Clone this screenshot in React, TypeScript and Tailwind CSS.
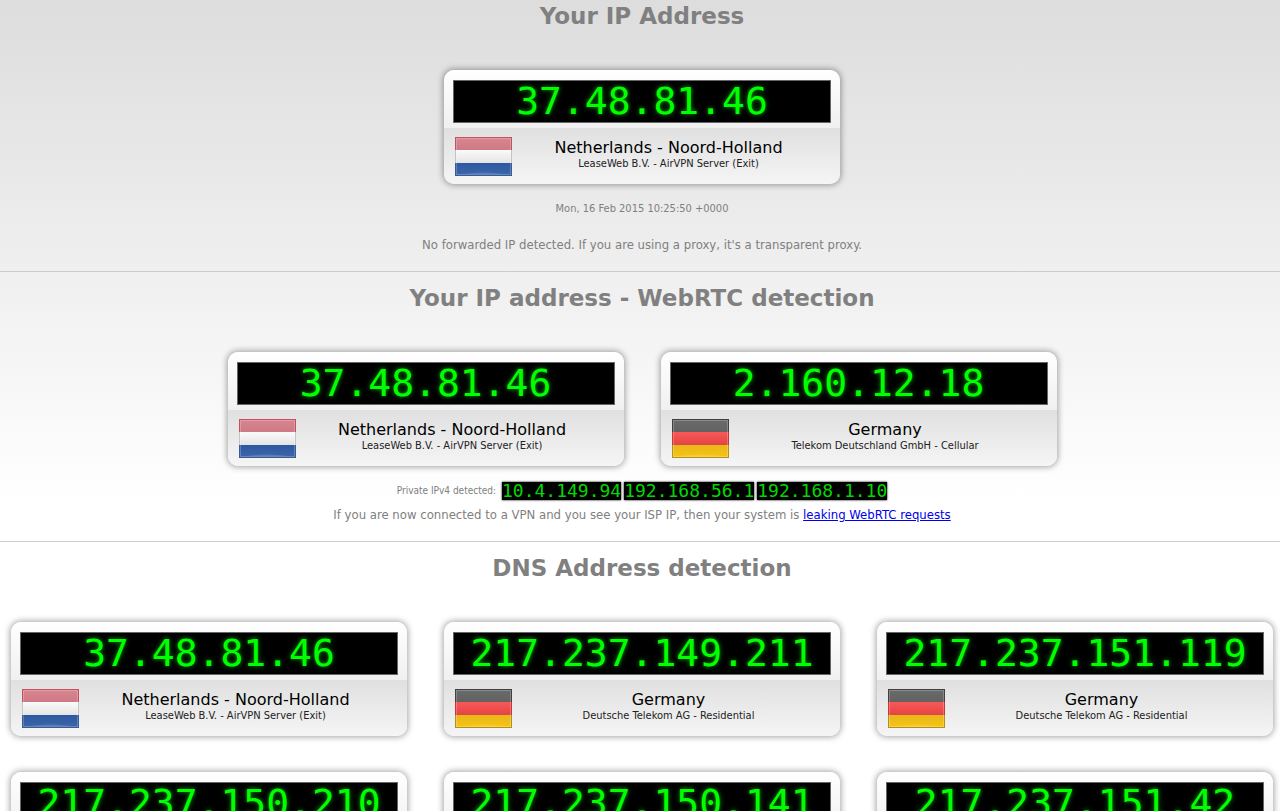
import { useId, type ReactNode } from 'react';

type Country = 'nl' | 'de';

type Address = {
    ip: string;
    country: Country;
    place: string;
    owner: string;
};

const vpnExit: Address = {
    ip: '37.48.81.46',
    country: 'nl',
    place: 'Netherlands - Noord-Holland',
    owner: 'LeaseWeb B.V. - AirVPN Server (Exit)',
};

const telekom = (ip: string, owner = 'Deutsche Telekom AG - Residential'): Address => ({
    ip,
    country: 'de',
    place: 'Germany',
    owner,
});

const webrtc = [vpnExit, telekom('2.160.12.18', 'Telekom Deutschland GmbH - Cellular')];

const privateIps = ['10.4.149.94', '192.168.56.1', '192.168.1.10'];

const dns = [
    vpnExit,
    telekom('217.237.149.211'),
    telekom('217.237.151.119'),
    telekom('217.237.150.210'),
    telekom('217.237.150.141'),
    telekom('217.237.151.42'),
];

// top colour, bottom colour and outline of each stripe
const stripes = {
    nl: [
        ['#d8858f', '#cd7a84', '#c4505f'],
        ['#fbfbfb', '#e4e4e4', '#c4c4c4'],
        ['#2d57a0', '#3c66aa', '#3a5a92'],
    ],
    de: [
        ['#6a6a6a', '#626262', '#404040'],
        ['#fa5858', '#e24444', '#c93636'],
        ['#e8b61c', '#f6c410', '#b08f26'],
    ],
};

function Flag({ country }: { country: Country }) {
    const id = useId();

    return (
        <svg className="h-[39px] w-[57px] shrink-0" viewBox="0 0 57 39" role="img" aria-label={country}>
            {stripes[country].map(([top, bottom, edge], i) => (
                <g key={i}>
                    <linearGradient id={`${id}${i}`} x2="0" y2="1">
                        <stop offset="0" stopColor={top} />
                        <stop offset="1" stopColor={bottom} />
                    </linearGradient>
                    <rect y={i * 13} width="57" height="13" fill={edge} />
                    <rect x="1" y={i === 0 ? 1 : i * 13} width="55" height={i === 1 ? 13 : 12} fill={`url(#${id}${i})`} />
                </g>
            ))}
            <rect x="1.5" y="1.5" width="54" height="36" fill="none" stroke="#fff" strokeOpacity="0.22" />
            <path d="M8 37Q28 34 49 37Z" fill="#fff" fillOpacity="0.15" />
        </svg>
    );
}

function AddressCard({ address }: { address: Address }) {
    return (
        <div className="w-[396px] overflow-hidden rounded-[10px] shadow-[0_0_6px_1px_rgba(0,0,0,0.36)]">
            <div className="bg-linear-to-b from-white to-[#f0f0f0] px-[9px] pt-[10px] pb-[5px]">
                <div className="border border-[#666] bg-black text-center font-['DejaVu_Sans_Mono',monospace] text-[38px] leading-[41px] text-[#00ff00] [text-shadow:0_0_5px_#00a000]">
                    {address.ip}
                </div>
            </div>
            <div className="flex bg-linear-to-b from-[#e0e0e0] to-[#f5f5f5] px-[11px] pt-[9px] pb-2">
                <Flag country={address.country} />
                <div className="flex-1 pt-px pr-1 text-center">
                    <div className="text-[16px] leading-[20px] text-black">{address.place}</div>
                    <div className="font-['DejaVu_Sans_Condensed','DejaVu_Sans',sans-serif] text-[11px] leading-[12px] text-[#222]">
                        {address.owner}
                    </div>
                </div>
            </div>
        </div>
    );
}

function Section({ title, children }: { title: string; children: ReactNode }) {
    return (
        <section className="border-t border-[#ccc] pt-[10px] pb-[17px] pl-1 first:border-t-0 first:pt-0">
            <h1 className="mb-[38px] text-center text-[23px] leading-[32px] font-bold text-[#808080]">{title}</h1>
            {children}
        </section>
    );
}

export default function App() {
    return (
        <main className="min-h-screen bg-white bg-linear-to-b from-[#ddd] to-white to-[500px] font-['DejaVu_Sans',sans-serif] text-[#808080]">
            <Section title="Your IP Address">
                <div className="flex justify-center">
                    <AddressCard address={vpnExit} />
                </div>
                <p className="mt-4 text-center font-['DejaVu_Sans_Condensed','DejaVu_Sans',sans-serif] text-[11px] leading-[18px]">
                    Mon, 16 Feb 2015 10:25:50 +0000
                </p>
                <p className="mt-[18px] text-center font-['DejaVu_Sans_Condensed','DejaVu_Sans',sans-serif] text-[13px] leading-[18px]">
                    No forwarded IP detected. If you are using a proxy, it's a transparent proxy.
                </p>
            </Section>

            <Section title="Your IP address - WebRTC detection">
                <div className="flex flex-wrap justify-center gap-[37px]">
                    {webrtc.map((address) => (
                        <AddressCard key={address.ip} address={address} />
                    ))}
                </div>
                <div className="mt-4 flex items-center justify-center gap-[3px] font-['DejaVu_Sans_Condensed','DejaVu_Sans',sans-serif] text-[10px] leading-[18px]">
                    <span className="mr-[3px]">Private IPv4 detected:</span>
                    {privateIps.map((ip) => (
                        <span
                            key={ip}
                            className="bg-black font-['DejaVu_Sans_Mono',monospace] text-[18px] leading-[18px] text-[#00d800] shadow-[0_0_2px_#000]"
                        >
                            {ip}
                        </span>
                    ))}
                </div>
                <p className="mt-[6px] text-center font-['DejaVu_Sans_Condensed','DejaVu_Sans',sans-serif] text-[13px] leading-[18px]">
                    If you are now connected to a VPN and you see your ISP IP, then your system is{' '}
                    <a href="#webrtc" className="text-[#0000ee] underline">
                        leaking WebRTC requests
                    </a>
                </p>
            </Section>

            <Section title="DNS Address detection">
                <div className="flex flex-wrap justify-center gap-x-[37px] gap-y-9">
                    {dns.map((address) => (
                        <AddressCard key={address.ip} address={address} />
                    ))}
                </div>
            </Section>
        </main>
    );
}
